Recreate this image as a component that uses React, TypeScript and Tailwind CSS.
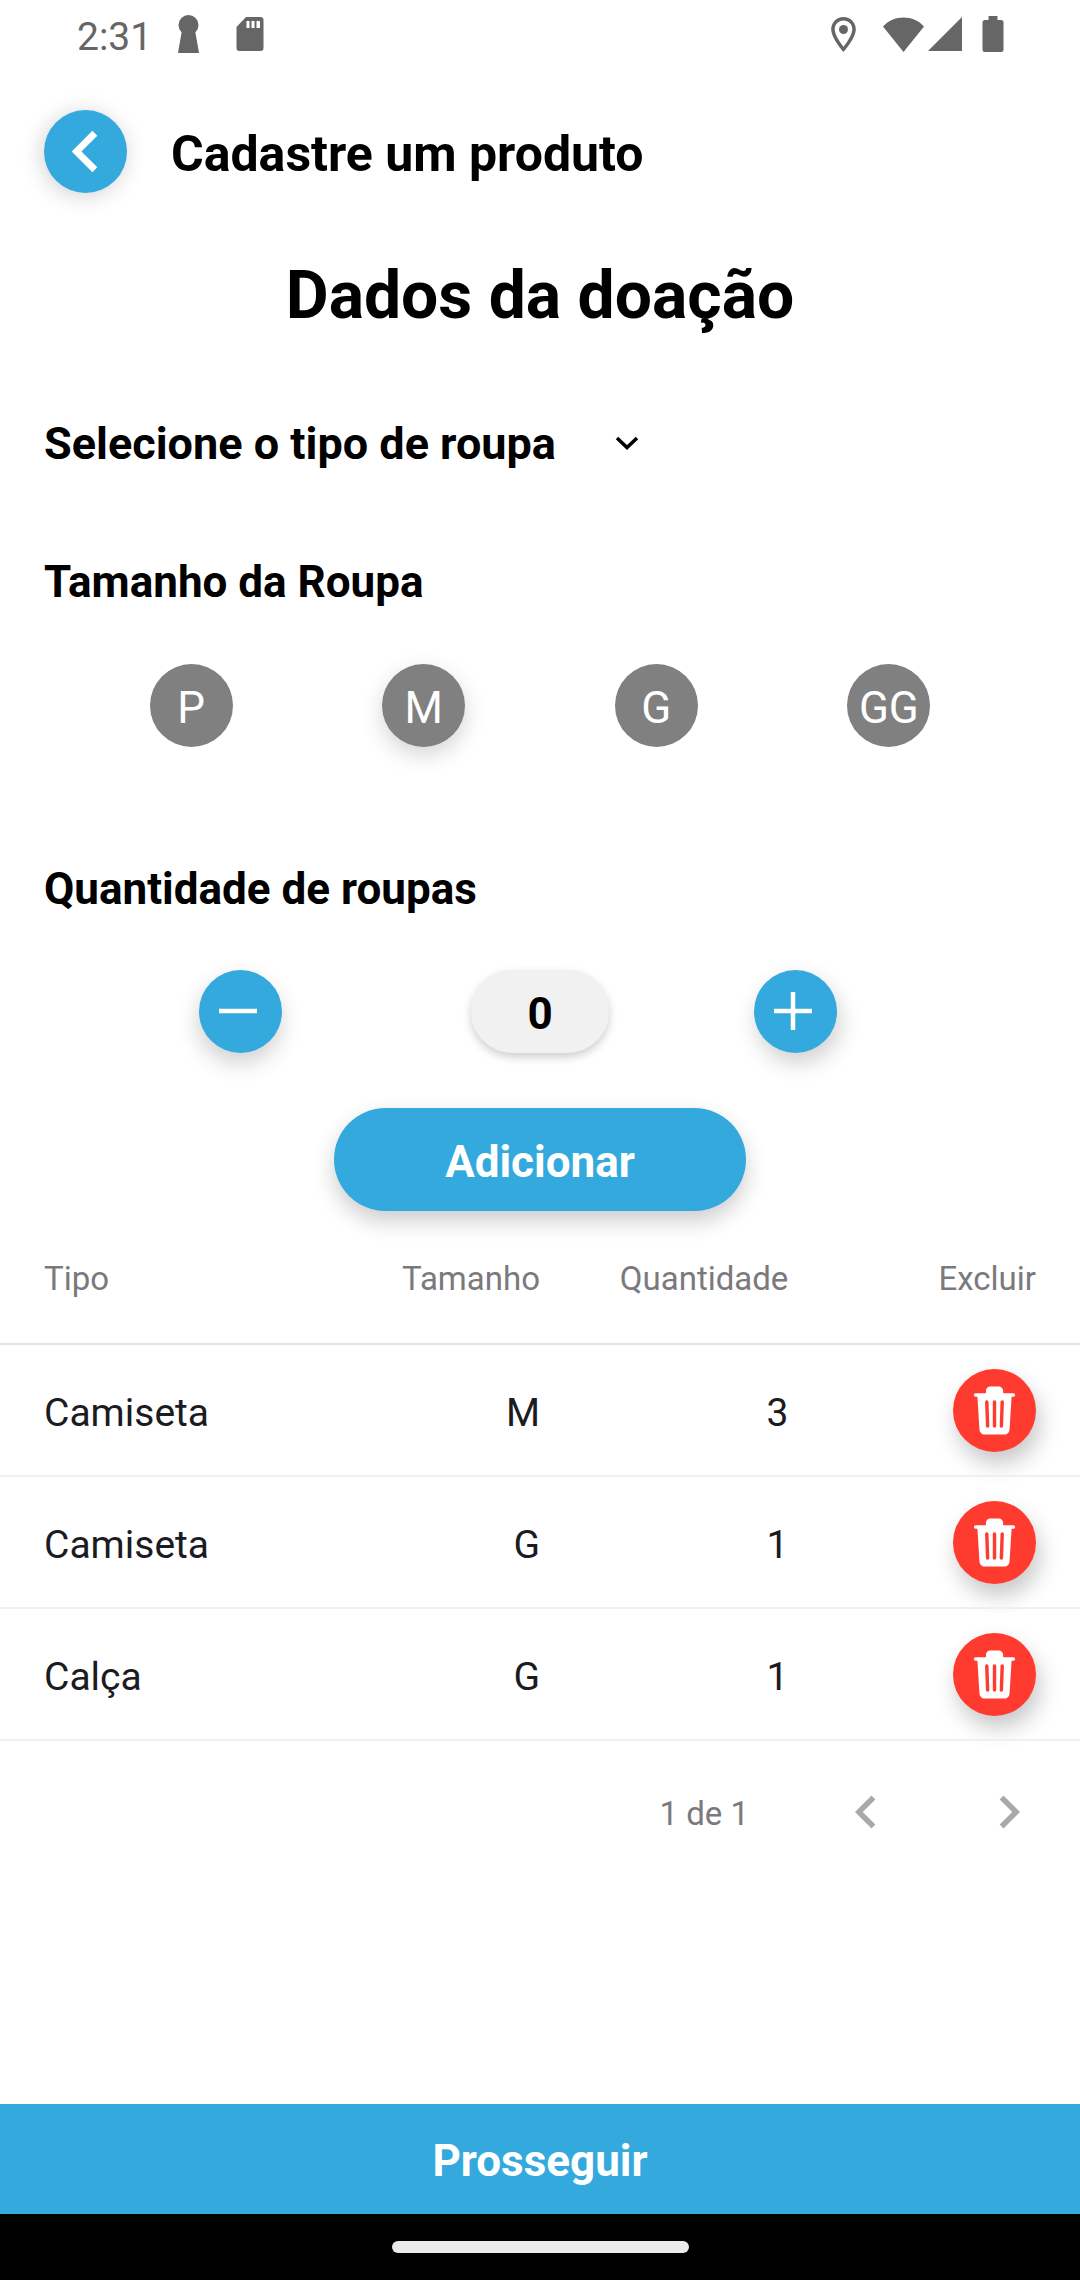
import { useState } from "react";

type Item = { id: number; type: string; size: string; amount: number };

const initialItems: Item[] = [
  { id: 1, type: "Camiseta", size: "M", amount: 3 },
  { id: 2, type: "Camiseta", size: "G", amount: 1 },
  { id: 3, type: "Calça", size: "G", amount: 1 },
];

const sizes = ["P", "M", "G", "GG"];

function StatusBar() {
  return (
    <div className="flex h-[68px] items-center justify-between pr-[76px] pl-[77px] text-[#666666]">
      <div className="flex items-center">
        <span className="pt-1.5 text-[39px] leading-[46px]">2:31</span>
        <svg className="ml-[26px] h-[38px] w-[21px]" viewBox="0 0 21 38" fill="currentColor" aria-hidden="true">
          <circle cx="10.500" cy="10" r="10" />
          <path d="M4 15h13l4 23H0z" />
        </svg>
        <svg className="ml-[37px] h-[34px] w-[28px]" viewBox="0 0 28 34" fill="currentColor" aria-hidden="true">
          <path
            fillRule="evenodd"
            d="M10 0h14.500A3 3 0 0 1 27.500 3v28a3 3 0 0 1-3 3h-21a3 3 0 0 1-3-3V10zM10.500 4v7h3V4zM15.500 4v7h3V4zM20.500 4v7h3.500V4z"
          />
        </svg>
      </div>
      <div className="flex items-center">
        <svg className="h-[35px] w-[25px]" viewBox="0 0 25 35" fill="currentColor" aria-hidden="true">
          <path
            fillRule="evenodd"
            d="M12.500 0C5.600 0 .2 5.500.2 12.300c0 9.100 12.300 22.700 12.300 22.700s12.300-13.600 12.300-22.700C24.800 5.500 19.400 0 12.500 0zm0 3.500c4.900 0 8.800 3.900 8.800 8.800 0 5-5 12.800-8.800 17.500-3.700-4.700-8.800-12.400-8.800-17.500 0-4.900 3.900-8.800 8.800-8.800z"
          />
          <circle cx="12.500" cy="12.500" r="4.500" />
        </svg>
        <svg className="ml-[27px] h-[35px] w-[41px]" viewBox="0 0 41 35" fill="currentColor" aria-hidden="true">
          <path d="M20.500 35L0 9.500C5.500 3.500 12.500.5 20.500.5S35.500 3.500 41 9.500z" />
        </svg>
        <svg className="ml-[4px] h-[34px] w-[34px]" viewBox="0 0 34 34" fill="currentColor" aria-hidden="true">
          <path d="M34 0v34H0z" />
        </svg>
        <svg className="ml-[20px] h-[36px] w-[22px]" viewBox="0 0 22 36" fill="currentColor" aria-hidden="true">
          <path d="M6.500 0h9v4H19a2.500 2.500 0 0 1 2.500 2.500v27A2.500 2.500 0 0 1 19 36H3a2.500 2.500 0 0 1-2.500-2.500v-27A2.500 2.500 0 0 1 3 4h3.500z" />
        </svg>
      </div>
    </div>
  );
}

function ChevronLeft({ className }: { className: string }) {
  return (
    <svg className={className} viewBox="0 0 24 24" fill="currentColor" aria-hidden="true">
      <path d="M15.410 16.580L10.830 12l4.580-4.590L14 6l-6 6 6 6z" />
    </svg>
  );
}

function ChevronRight({ className }: { className: string }) {
  return (
    <svg className={className} viewBox="0 0 24 24" fill="currentColor" aria-hidden="true">
      <path d="M8.590 16.580L13.170 12 8.590 7.410 10 6l6 6-6 6z" />
    </svg>
  );
}

function TrashIcon() {
  return (
    <svg className="size-[55px]" viewBox="0 0 512 512" aria-hidden="true">
      <path
        fill="#fff"
        d="M432 96h-96V72a40 40 0 0 0-40-40h-80a40 40 0 0 0-40 40v24H80a16 16 0 0 0 0 32h17l19 304.920c1.420 26.850 22 47.080 48 47.080h184c26.130 0 46.300-19.780 48-47l19-305h17a16 16 0 0 0 0-32z"
      />
      <path
        stroke="#ff3b30"
        strokeWidth="32"
        strokeLinecap="round"
        fill="none"
        d="M184 176l8 224M256 176v224M328 176l-8 224"
      />
    </svg>
  );
}

export default function App() {
  const [items, setItems] = useState(initialItems);
  const [size, setSize] = useState("M");
  const [amount, setAmount] = useState(0);
  const [kind, setKind] = useState("");

  const addItem = () => {
    if (!kind || amount < 1) return;
    setItems([...items, { id: Date.now(), type: kind, size, amount }]);
  };

  return (
    <div className="flex min-h-screen flex-col bg-white font-['Roboto',sans-serif] text-black">
      <StatusBar />

      <header className="flex items-center gap-[44px] px-[44px] pt-[42px]">
        <button
          type="button"
          aria-label="Voltar"
          className="size-[83px] shrink-0 rounded-full bg-[#34a9dd] text-white shadow-[-2px_3px_22px_rgba(0,0,0,0.18)]"
        >
          <ChevronLeft className="size-full" />
        </button>
        <h1 className="pt-1 text-[50px] leading-[60px] font-bold">Cadastre um produto</h1>
      </header>

      <main className="flex flex-1 flex-col">
        <h2 className="mt-[64px] text-center text-[66px] leading-[78px] font-bold">Dados da doação</h2>

        <div className="relative mt-[83px] ml-[44px] self-start">
          <select
            aria-label="Selecione o tipo de roupa"
            value={kind}
            onChange={(e) => setKind(e.target.value)}
            className="block appearance-none bg-transparent pr-[84px] text-[45px] leading-[52px] font-bold"
          >
            <option value="">Selecione o tipo de roupa</option>
            <option value="Camiseta">Camiseta</option>
            <option value="Calça">Calça</option>
          </select>
          <svg
            className="pointer-events-none absolute top-[12px] right-0 size-[26px]"
            viewBox="0 0 26 26"
            fill="none"
            stroke="currentColor"
            strokeWidth="3.500"
            aria-hidden="true"
          >
            <path d="M3 8l10 9.500L23 8" />
          </svg>
        </div>

        <h3 className="mt-[86px] px-[44px] text-[44px] leading-[52px] font-bold">Tamanho da Roupa</h3>
        <div className="mt-[56px] flex justify-evenly">
          {sizes.map((s) => (
            <button
              key={s}
              type="button"
              aria-pressed={s === size}
              onClick={() => setSize(s)}
              className={
                s === size
                  ? "flex size-[83px] items-center justify-center rounded-full bg-[#808080] pt-1 text-[44px] leading-[52px] text-white shadow-[0_8px_22px_rgba(0,0,0,0.17)]"
                  : "flex size-[83px] items-center justify-center rounded-full bg-[#808080] pt-1 text-[44px] leading-[52px] text-white"
              }
            >
              {s}
            </button>
          ))}
        </div>

        <h3 className="mt-[116px] px-[44px] text-[44px] leading-[52px] font-bold">Quantidade de roupas</h3>
        <div className="mt-[55px] flex justify-center gap-[145px] pr-[44px]">
          <button
            type="button"
            aria-label="Diminuir"
            onClick={() => setAmount(Math.max(0, amount - 1))}
            className="mr-[44px] size-[83px] rounded-full bg-[#34a9dd] text-white shadow-[-1px_10px_22px_rgba(0,0,0,0.19)]"
          >
            <svg className="size-full" viewBox="0 0 83 83" stroke="currentColor" strokeWidth="4.500" aria-hidden="true">
              <path d="M20 41h38" />
            </svg>
          </button>
          <input
            aria-label="Quantidade de roupas"
            inputMode="numeric"
            value={amount}
            onChange={(e) => setAmount(Number(e.target.value) || 0)}
            className="h-[83px] w-[138px] rounded-full bg-[#f1f1f1] pt-1 text-center text-[44px] leading-[52px] font-bold shadow-[0_4px_10px_rgba(0,0,0,0.2)] outline-none"
          />
          <button
            type="button"
            aria-label="Aumentar"
            onClick={() => setAmount(amount + 1)}
            className="size-[83px] rounded-full bg-[#34a9dd] text-white shadow-[3px_10px_22px_rgba(0,0,0,0.19)]"
          >
            <svg className="size-full" viewBox="0 0 83 83" stroke="currentColor" strokeWidth="4.500" aria-hidden="true">
              <path d="M20 41h38M39 22v38" />
            </svg>
          </button>
        </div>

        <button
          type="button"
          onClick={addItem}
          className="mt-[55px] h-[103px] w-[412px] self-center rounded-full bg-[#34a9dd] pt-1 text-[44px] leading-[52px] font-bold text-white shadow-[0_10px_22px_rgba(0,0,0,0.2)]"
        >
          Adicionar
        </button>

        <table className="mt-[48px] w-full table-fixed text-right text-[#1c1b1f]">
          <colgroup>
            <col className="w-[27%]" />
            <col className="w-[23%]" />
            <col className="w-[23%]" />
            <col className="w-[27%]" />
          </colgroup>
          <thead>
            <tr className="border-b-2 border-[#e7e0ec] text-[33px] leading-[40px] text-[#7a7a7c]">
              <th className="pb-[44px] pl-[44px] text-left font-normal">Tipo</th>
              <th className="pb-[44px] font-normal">Tamanho</th>
              <th className="pb-[44px] font-normal">Quantidade</th>
              <th className="pr-[44px] pb-[44px] font-normal">Excluir</th>
            </tr>
          </thead>
          <tbody>
            {items.map((item) => (
              <tr key={item.id} className="h-[132px] border-b-2 border-[#f0eff4] text-[39px] leading-[46px]">
                <td className="pt-1.5 pl-[44px] text-left">{item.type}</td>
                <td className="pt-1.5">{item.size}</td>
                <td className="pt-1.5">{item.amount}</td>
                <td className="pr-[44px]">
                  <button
                    type="button"
                    aria-label={`Excluir ${item.type} ${item.size}`}
                    onClick={() => setItems(items.filter((i) => i.id !== item.id))}
                    className="ml-auto flex size-[83px] items-center justify-center rounded-full bg-[#ff3b30] shadow-[4px_12px_22px_rgba(0,0,0,0.22)]"
                  >
                    <TrashIcon />
                  </button>
                </td>
              </tr>
            ))}
          </tbody>
        </table>

        <nav aria-label="Paginação" className="flex h-[142px] items-center justify-end pr-[38px] text-[#a9a9ab]">
          <span className="mr-[84px] pt-1 text-[33px] leading-[40px] text-[#7a7a7c]">1 de 1</span>
          <button type="button" aria-label="Página anterior" className="mr-[77px]">
            <ChevronLeft className="size-[66px]" />
          </button>
          <button type="button" aria-label="Próxima página">
            <ChevronRight className="size-[66px]" />
          </button>
        </nav>
      </main>

      <button type="button" className="h-[110px] w-full bg-[#34a9dd] pt-1 text-[44px] leading-[52px] font-bold text-white">
        Prosseguir
      </button>
      <div className="flex h-[66px] items-center justify-center bg-black">
        <div className="h-[12px] w-[297px] rounded-full bg-[#ebebeb]" />
      </div>
    </div>
  );
}
